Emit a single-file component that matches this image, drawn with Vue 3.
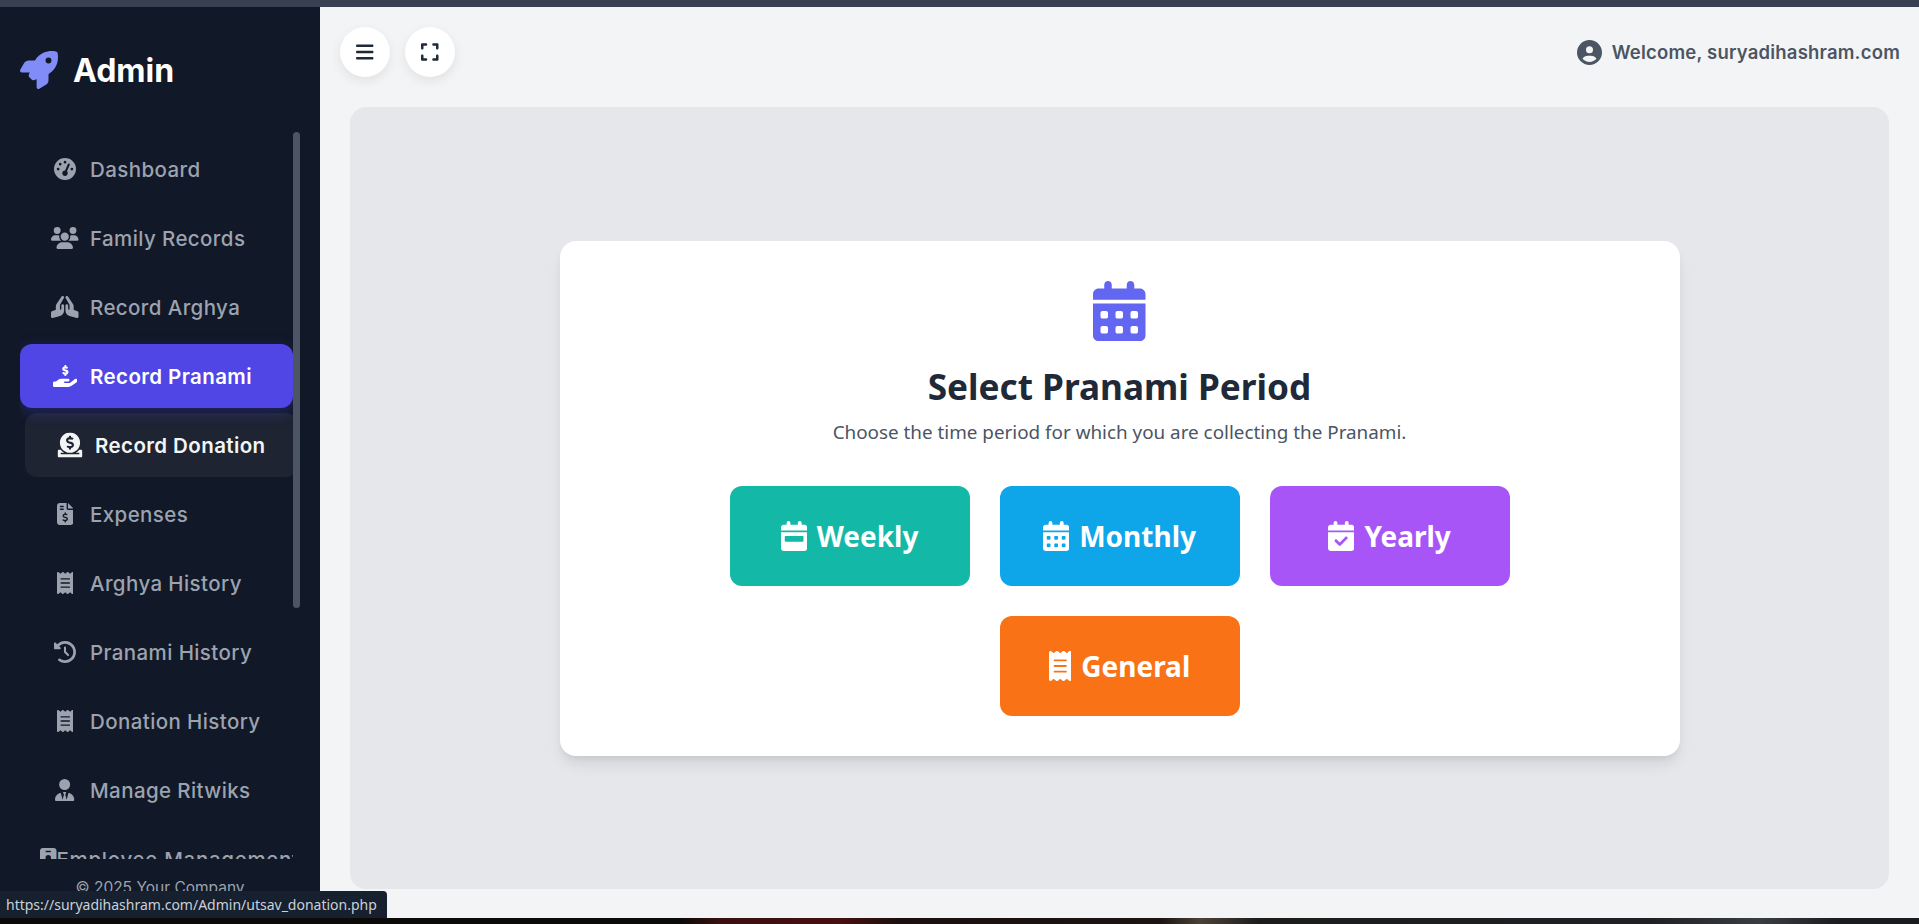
<script setup>
const calTop = 'M128 0c17.7 0 32 14.3 32 32V64H288V32c0-17.7 14.3-32 32-32s32 14.3 32 32V64h48c26.5 0 48 21.5 48 48v48H0V112C0 85.5 21.5 64 48 64H96V32c0-17.7 14.3-32 32-32z'
const calDays = calTop + 'M0 192H448V464c0 26.5-21.5 48-48 48H48c-26.5 0-48-21.5-48-48V192zm64 80v32c0 8.8 7.2 16 16 16h32c8.8 0 16-7.2 16-16V272c0-8.8-7.2-16-16-16H80c-8.8 0-16 7.2-16 16zm128 0v32c0 8.8 7.2 16 16 16h32c8.8 0 16-7.2 16-16V272c0-8.8-7.2-16-16-16H208c-8.8 0-16 7.2-16 16zm144-16c-8.8 0-16 7.2-16 16v32c0 8.8 7.2 16 16 16h32c8.8 0 16-7.2 16-16V272c0-8.8-7.2-16-16-16H336zM64 400v32c0 8.8 7.2 16 16 16h32c8.8 0 16-7.2 16-16V400c0-8.8-7.2-16-16-16H80c-8.8 0-16 7.2-16 16zm144-16c-8.8 0-16 7.2-16 16v32c0 8.8 7.2 16 16 16h32c8.8 0 16-7.2 16-16V400c0-8.8-7.2-16-16-16H208zm112 16v32c0 8.8 7.2 16 16 16h32c8.8 0 16-7.2 16-16V400c0-8.8-7.2-16-16-16H336c-8.8 0-16 7.2-16 16z'
const calWeek = calTop + 'M0 192H448V464c0 26.5-21.5 48-48 48H48c-26.5 0-48-21.5-48-48V192zm80 64c-8.8 0-16 7.2-16 16v64c0 8.8 7.2 16 16 16H368c8.8 0 16-7.2 16-16V272c0-8.8-7.2-16-16-16H80z'
const calCheck = calTop + 'M0 192H448V464c0 26.5-21.5 48-48 48H48c-26.5 0-48-21.5-48-48V192zM329 305c9.4-9.4 9.4-24.6 0-33.9s-24.6-9.4-33.9 0l-95 95-47-47c-9.4-9.4-24.6-9.4-33.9 0s-9.4 24.6 0 33.9l64 64c9.4 9.4 24.6 9.4 33.9 0L329 305z'
const receipt = 'M14 2.2C22.5-1.7 32.5-.3 39.6 5.8L80 40.4 120.4 5.8c9-7.7 22.3-7.7 31.2 0L192 40.4 232.4 5.8c9-7.7 22.2-7.7 31.2 0L304 40.4 344.4 5.8c7.1-6.1 17.1-7.5 25.6-3.6s14 12.4 14 21.8V488c0 9.4-5.5 17.9-14 21.8s-18.5 2.5-25.6-3.6L304 471.6l-40.4 34.6c-9 7.7-22.2 7.7-31.2 0L192 471.6l-40.4 34.6c-9 7.7-22.3 7.7-31.2 0L80 471.6 39.6 506.2c-7.1 6.1-17.1 7.5-25.6 3.6S0 497.4 0 488V24C0 14.6 5.5 6.1 14 2.2zM96 144c-8.8 0-16 7.2-16 16s7.2 16 16 16H288c8.8 0 16-7.2 16-16s-7.2-16-16-16H96zM80 352c0 8.8 7.2 16 16 16H288c8.8 0 16-7.2 16-16s-7.2-16-16-16H96c-8.8 0-16 7.2-16 16zM96 240c-8.8 0-16 7.2-16 16s7.2 16 16 16H288c8.8 0 16-7.2 16-16s-7.2-16-16-16H96z'

const navItems = [
  { label: 'Dashboard', w: 512, d: 'M0 256a256 256 0 1 1 512 0A256 256 0 1 1 0 256zM288 96a32 32 0 1 0 -64 0 32 32 0 1 0 64 0zM256 416c35.3 0 64-28.7 64-64c0-17.4-6.9-33.1-18.1-44.6L366 161.7c5.3-12.1-.2-26.3-12.3-31.6s-26.3 .2-31.6 12.3L257.9 288c-.6 0-1.3 0-1.9 0c-35.3 0-64 28.7-64 64s28.7 64 64 64zM176 144a32 32 0 1 0 -64 0 32 32 0 1 0 64 0zM96 288a32 32 0 1 0 0-64 32 32 0 1 0 0 64zm352-32a32 32 0 1 0 -64 0 32 32 0 1 0 64 0z' },
  { label: 'Family Records', w: 640, d: 'M144 0a80 80 0 1 1 0 160A80 80 0 1 1 144 0zM512 0a80 80 0 1 1 0 160A80 80 0 1 1 512 0zM0 298.7C0 239.8 47.8 192 106.7 192h42.7c15.9 0 31 3.5 44.6 9.7c-1.3 7.2-1.9 14.7-1.9 22.3c0 38.2 16.8 72.5 43.3 96c-.2 0-.4 0-.7 0H21.3C9.6 320 0 310.4 0 298.7zM405.3 320c-.2 0-.4 0-.7 0c26.6-23.5 43.3-57.8 43.3-96c0-7.6-.7-15-1.9-22.3c13.6-6.3 28.7-9.7 44.6-9.7h42.7C592.2 192 640 239.8 640 298.7c0 11.8-9.6 21.3-21.3 21.3H405.3zM224 224a96 96 0 1 1 192 0 96 96 0 1 1 -192 0zM128 485.3C128 411.7 187.7 352 261.3 352H378.7C452.3 352 512 411.7 512 485.3c0 14.7-11.9 26.7-26.7 26.7H154.7c-14.7 0-26.7-11.9-26.7-26.7z' },
  { label: 'Record Arghya', w: 640, d: 'M351.2 4.8c3.2-2 6.6-3.3 10-4.1c4.7-1 9.6-.9 14.1 .1c7.7 1.8 14.8 6.5 19.4 13.6L514.6 194.2c8.8 13.1 13.4 28.6 13.4 44.4v73.5c0 6.9 4.4 13 10.9 15.2l79.2 26.4C631.2 358 640 370.2 640 384v96c0 9.9-4.6 19.3-12.5 25.4s-18.1 8.1-27.7 5.5L431 465.9c-56-14.9-95-65.7-95-123.7V224c0-17.7 14.3-32 32-32s32 14.3 32 32v80c0 8.8 7.2 16 16 16s16-7.2 16-16V219.1c0-7-1.8-13.8-5.3-19.8L340.3 48.1c-1.7-3-2.9-6.1-3.6-9.3c-1-4.7-1-9.6 .1-14.1c1.9-8 6.8-15.2 14.4-19.9zm-62.4 0c7.5 4.6 12.4 11.9 14.4 19.8c1.1 4.6 1.2 9.4 .1 14.1c-.7 3.2-1.9 6.3-3.6 9.3L213.3 199.3c-3.5 6-5.3 12.9-5.3 19.8V304c0 8.8 7.2 16 16 16s16-7.2 16-16V224c0-17.7 14.3-32 32-32s32 14.3 32 32V342.3c0 58-39 108.7-95 123.7l-168.7 45c-9.6 2.6-19.9 .5-27.7-5.5S0 489.9 0 480V384c0-13.8 8.8-26 21.9-30.4l79.2-26.4c6.5-2.2 10.9-8.3 10.9-15.2V238.5c0-15.8 4.7-31.2 13.4-44.4L245.2 14.5c4.6-7.1 11.7-11.8 19.4-13.6c4.6-1.1 9.4-1.2 14.1-.1c3.5 .8 6.9 2.1 10 4.1z' },
  { label: 'Record Pranami', w: 576, state: 'active', d: 'M312 24V34.5c6.4 1.2 12.6 2.7 18.2 4.2c12.8 3.4 20.4 16.6 17 29.4s-16.6 20.4-29.4 17c-10.9-2.9-21.1-4.9-30.2-5c-7.3-.1-14.7 1.7-19.4 4.4c-2.1 1.3-3.1 2.4-3.5 3c-.3 .5-.7 1.2-.7 2.8c0 .3 0 .5 0 .6c.2 .2 .9 1.2 3.3 2.6c5.8 3.5 14.4 6.2 27.4 10.1l.9 .3c11.1 3.3 25.9 7.8 37.9 15.3c13.7 8.6 26.1 22.9 26.4 44.9c.3 22.5-11.4 38.9-26.7 48.5c-6.7 4.1-13.9 7-21.3 8.8V232c0 13.3-10.7 24-24 24s-24-10.7-24-24V220.6c-9.5-2.3-18.2-5.3-25.6-7.8c-2.1-.7-4.1-1.4-6-2c-12.6-4.2-19.4-17.8-15.2-30.4s17.8-19.4 30.4-15.2c2.6 .9 5 1.7 7.3 2.5c13.6 4.6 23.4 7.9 33.9 8.3c8 .3 15.1-1.6 19.2-4.1c1.9-1.2 2.8-2.2 3.2-2.9c.4-.6 .9-1.8 .8-4.1l0-.2c0-1 0-2.1-4-4.6c-5.7-3.6-14.3-6.4-27.1-10.3l-1.9-.6c-10.8-3.2-25-7.5-36.4-14.4c-13.5-8.1-26.5-22-26.6-44.1c-.1-22.9 12.9-38.6 27.7-47.4c6.4-3.8 13.3-6.4 20.2-8.2V24c0-13.3 10.7-24 24-24s24 10.7 24 24zM568.2 336.3c13.1 17.8 9.3 42.8-8.5 55.9L433.1 485.5c-23.4 17.2-51.6 26.5-80.7 26.5H192 32c-17.7 0-32-14.3-32-32V416c0-17.7 14.3-32 32-32H68.8l44.9-36c22.7-18.2 50.9-28 80-28H272h16 64c17.7 0 32 14.3 32 32s-14.3 32-32 32H288 272c-8.8 0-16 7.2-16 16s7.2 16 16 16H392.6l119.7-88.2c17.8-13.1 42.8-9.3 55.9 8.5z' },
  { label: 'Record Donation', w: 512, state: 'hover', d: 'M256 416c114.9 0 208-93.1 208-208S370.9 0 256 0 48 93.1 48 208s93.1 208 208 208zM233.8 97.4V80.6c0-9.2 7.4-16.6 16.6-16.6h11.1c9.2 0 16.6 7.4 16.6 16.6v17c15.5 .8 30.5 6.1 43 15.4 5.6 4.1 6.2 12.3 1.2 17.1L306 145.6c-3.8 3.7-9.5 3.8-14 1-5.4-3.4-11.4-5.1-17.8-5.1h-38.9c-9 0-16.3 8.2-16.3 18.3 0 8.2 5 15.5 12.1 17.6l62.3 18.7c25.7 7.7 43.7 32.4 43.7 60.1 0 34-26.4 61.5-59.1 62.4v16.8c0 9.2-7.4 16.6-16.6 16.6h-11.1c-9.2 0-16.6-7.4-16.6-16.6v-17c-15.5-.8-30.5-6.1-43-15.4-5.6-4.1-6.2-12.3-1.2-17.1l16.3-15.5c3.8-3.7 9.5-3.8 14-1 5.4 3.4 11.4 5.1 17.8 5.1h38.9c9 0 16.3-8.2 16.3-18.3 0-8.2-5-15.5-12.1-17.6l-62.3-18.7c-25.7-7.7-43.7-32.4-43.7-60.1 .1-34 26.4-61.5 59.1-62.4zM480 352h-32.5c-19.6 26-44.6 47.7-73 64h63.8c5.3 0 9.6 3.6 9.6 8v16c0 4.4-4.3 8-9.6 8H73.6c-5.3 0-9.6-3.6-9.6-8v-16c0-4.4 4.3-8 9.6-8h63.8c-28.4-16.3-53.3-38-73-64H32c-17.7 0-32 14.3-32 32v96c0 17.7 14.3 32 32 32h448c17.7 0 32-14.3 32-32v-96c0-17.7-14.3-32-32-32z' },
  { label: 'Expenses', w: 384, d: 'M64 0C28.7 0 0 28.7 0 64V448c0 35.3 28.7 64 64 64H320c35.3 0 64-28.7 64-64V160H256c-17.7 0-32-14.3-32-32V0H64zM256 0V128H384L256 0zM64 80c0-8.8 7.2-16 16-16h64c8.8 0 16 7.2 16 16s-7.2 16-16 16H80c-8.8 0-16-7.2-16-16zm0 64c0-8.8 7.2-16 16-16h64c8.8 0 16 7.2 16 16s-7.2 16-16 16H80c-8.8 0-16-7.2-16-16zm128 72c8.8 0 16 7.2 16 16v17.3c8.5 1.2 16.7 3.1 24.1 5.1c8.5 2.3 13.6 11 11.3 19.6s-11 13.6-19.6 11.3c-11.1-3-22-5.2-32.1-5.3c-8.4-.1-17.4 1.8-23.6 5.5c-5.7 3.4-8.1 7.3-8.1 12.8c0 3.7 1.3 6.5 7.3 10.1c6.9 4.1 16.6 7.1 29.2 10.9l.5 .1c11.3 3.4 25.3 7.6 36.3 14.6c12.1 7.6 22.4 19.7 22.7 38.2c.3 19.3-9.6 33.3-22.9 41.6c-7.7 4.8-16.4 7.6-25.1 9.1V440c0 8.8-7.2 16-16 16s-16-7.2-16-16V422.2c-11.2-2.1-21.7-5.7-30.9-8.9c-2.1-.7-4.2-1.4-6.2-2.1c-8.4-2.8-12.9-11.9-10.1-20.2s11.9-12.9 20.2-10.1c2.5 .8 4.8 1.6 7.1 2.4c13.6 4.6 24.6 8.4 36.3 8.7c9.1 .3 17.9-1.7 23.7-5.3c5.1-3.2 7.9-7.3 7.8-14c-.1-4.6-1.8-7.8-7.7-11.6c-6.8-4.3-16.5-7.4-29-11.2l-1.6-.5c-11-3.3-24.3-7.3-34.8-13.7c-12-7.2-22.6-18.9-22.7-37.3c-.1-19.4 10.8-32.8 23.8-40.5c7.5-4.4 15.8-7.2 24.1-8.7V232c0-8.8 7.2-16 16-16z' },
  { label: 'Arghya History', w: 384, d: receipt },
  { label: 'Pranami History', w: 512, d: 'M75 75L41 41C25.9 25.9 0 36.6 0 57.9V168c0 13.3 10.7 24 24 24H134.1c21.4 0 32.1-25.9 17-41l-30.8-30.8C155 85.5 203 64 256 64c106 0 192 86 192 192s-86 192-192 192c-40.8 0-78.6-12.7-109.7-34.4c-14.5-10.1-34.4-6.6-44.6 7.9s-6.6 34.4 7.9 44.6C151.2 495 201.7 512 256 512c141.4 0 256-114.6 256-256S397.4 0 256 0C185.3 0 121.3 28.7 75 75zm181 53c-13.3 0-24 10.7-24 24V256c0 6.4 2.5 12.5 7 17l72 72c9.4 9.4 24.6 9.4 33.9 0s9.4-24.6 0-33.9l-65-65V152c0-13.3-10.7-24-24-24z' },
  { label: 'Donation History', w: 384, d: receipt },
  { label: 'Manage Ritwiks', w: 448, d: 'M96 128a128 128 0 1 0 256 0A128 128 0 1 0 96 128zm94.5 200.2l18.6 31L175.8 483.1l-36-146.9c-2-8.1-9.8-13.4-17.9-11.3C51.9 342.4 0 405.8 0 481.3c0 17 13.8 30.7 30.7 30.7H162.5c0 0 0 0 .1 0H168 280h5.3c0 0 0 0 .1 0H417.3c17 0 30.7-13.8 30.7-30.7c0-75.5-51.9-138.9-121.9-156.4c-8.1-2-15.9 3.3-17.9 11.3l-36 146.9L238.9 359.2l18.6-31c6.4-10.7-1.3-24.2-13.7-24.2H224 204.3c-12.4 0-20.1 13.6-13.7 24.2z' },
  { label: 'Employee Management', w: 384, state: 'long', d: 'M64 0C28.7 0 0 28.7 0 64V448c0 35.3 28.7 64 64 64H320c35.3 0 64-28.7 64-64V64c0-35.3-28.7-64-64-64H64zm96 320h64c44.2 0 80 35.8 80 80c0 8.8-7.2 16-16 16H96c-8.8 0-16-7.2-16-16c0-44.2 35.8-80 80-80zm-32-96a64 64 0 1 1 128 0 64 64 0 1 1 -128 0zM144 64h96c8.8 0 16 7.2 16 16s-7.2 16-16 16H144c-8.8 0-16-7.2-16-16s7.2-16 16-16z' },
]

const periods = [
  { label: 'Weekly', color: '#14b8a6', w: 448, d: calWeek },
  { label: 'Monthly', color: '#0ea5e9', w: 448, d: calDays },
  { label: 'Yearly', color: '#a855f7', w: 448, d: calCheck },
  { label: 'General', color: '#f97316', w: 384, d: receipt },
]
</script>

<template>
  <div class="page">
    <div class="top-strip"></div>
    <div class="shell">
      <aside class="sidebar">
        <div class="brand">
          <svg class="brand-icon" viewBox="0 0 512 512"><path fill="currentColor" d="M156.6 384.9L125.7 354c-8.5-8.5-11.5-20.8-7.7-32.2c3-8.9 7-20.5 11.8-33.8L24 288c-8.6 0-16.6-4.6-20.9-12.1s-4.2-16.7 .2-24.1l52.5-88.5c13-21.9 36.5-35.3 62-35.3l82.3 0c2.4-4 4.8-7.7 7.2-11.3C289.1-4.1 411.1-8.1 483.9 5.3c11.6 2.1 20.6 11.2 22.8 22.8c13.4 72.9 9.3 194.8-111.4 276.7c-3.5 2.4-7.3 4.8-11.3 7.2v82.3c0 25.5-13.4 49-35.3 62l-88.5 52.5c-7.4 4.4-16.6 4.5-24.1 .2s-12.1-12.2-12.1-20.9V380.8c-14.1 4.9-26.4 8.9-35.7 11.9c-11.2 3.6-23.4 .5-31.8-7.8zM384 168a40 40 0 1 0 0-80 40 40 0 1 0 0 80z"/></svg>
          <span>Admin</span>
        </div>
        <div class="nav-wrap">
          <nav class="nav">
            <a v-for="item in navItems" :key="item.label" class="nav-item" :class="item.state">
              <span class="nav-icon">
                <svg :viewBox="`0 0 ${item.w} 512`" :style="{ width: (item.w / 512) * 22 + 'px' }"><path fill="currentColor" :d="item.d"/></svg>
              </span>
              <span class="nav-label">{{ item.label }}</span>
            </a>
          </nav>
          <div class="scroll-thumb"></div>
        </div>
        <div class="copyright">© 2025 Your Company</div>
      </aside>

      <main class="main">
        <header class="topbar">
          <div class="top-buttons">
            <button class="round-btn">
              <svg viewBox="0 0 448 512"><path fill="currentColor" d="M0 96C0 78.3 14.3 64 32 64H416c17.7 0 32 14.3 32 32s-14.3 32-32 32H32C14.3 128 0 113.7 0 96zM0 256c0-17.7 14.3-32 32-32H416c17.7 0 32 14.3 32 32s-14.3 32-32 32H32c-17.7 0-32-14.3-32-32zM448 416c0 17.7-14.3 32-32 32H32c-17.7 0-32-14.3-32-32s14.3-32 32-32H416c17.7 0 32 14.3 32 32z"/></svg>
            </button>
            <button class="round-btn">
              <svg viewBox="0 0 448 512"><path fill="currentColor" d="M32 32C14.3 32 0 46.3 0 64v96c0 17.7 14.3 32 32 32s32-14.3 32-32V96h64c17.7 0 32-14.3 32-32s-14.3-32-32-32H32zM64 352c0-17.7-14.3-32-32-32s-32 14.3-32 32v96c0 17.7 14.3 32 32 32h96c17.7 0 32-14.3 32-32s-14.3-32-32-32H64V352zM320 32c-17.7 0-32 14.3-32 32s14.3 32 32 32h64v64c0 17.7 14.3 32 32 32s32-14.3 32-32V64c0-17.7-14.3-32-32-32H320zM448 352c0-17.7-14.3-32-32-32s-32 14.3-32 32v64H320c-17.7 0-32 14.3-32 32s14.3 32 32 32h96c17.7 0 32-14.3 32-32V352z"/></svg>
            </button>
          </div>
          <div class="welcome">
            <svg viewBox="0 0 512 512"><path fill="currentColor" d="M399 384.2C376.9 345.8 335.4 320 288 320H224c-47.4 0-88.9 25.8-111 64.2c35.2 39.2 86.2 63.8 143 63.8s107.8-24.7 143-63.8zM0 256a256 256 0 1 1 512 0A256 256 0 1 1 0 256zm256 16a72 72 0 1 0 0-144 72 72 0 1 0 0 144z"/></svg>
            <span>Welcome, suryadihashram.com</span>
          </div>
        </header>

        <section class="panel">
          <div class="card">
            <svg class="card-icon" viewBox="0 0 448 512"><path fill="currentColor" :d="calDays"/></svg>
            <h1>Select Pranami Period</h1>
            <p>Choose the time period for which you are collecting the Pranami.</p>
            <div class="period-list">
              <a v-for="p in periods" :key="p.label" class="period" :style="{ background: p.color }">
                <svg :viewBox="`0 0 ${p.w} 512`" :style="{ width: (p.w / 512) * 30 + 'px' }"><path fill="currentColor" :d="p.d"/></svg>
                <span>{{ p.label }}</span>
              </a>
            </div>
          </div>
        </section>
      </main>
    </div>
    <div class="bottom-strip"></div>
    <div class="status-tip">https://suryadihashram.com/Admin/utsav_donation.php</div>
  </div>
</template>

<style scoped>
.page {
  position: relative;
  height: 924px;
  display: flex;
  flex-direction: column;
  overflow: hidden;
  font-family: "Noto Sans", "Open Sans", sans-serif;
}

.top-strip {
  height: 7px;
  background: #374151;
  flex: none;
}

.bottom-strip {
  height: 6px;
  flex: none;
  background: linear-gradient(90deg, #0c0a09 0, #0c0a09 680px, #3a0f10 720px, #45100f 840px, #1a0f0e 900px, #1a1512 1160px, #4a4238 1200px, #1c1c1c 1260px, #1e2024 1650px, #3a3d44 1760px, #1a1b1e 1840px);
}

.shell {
  flex: 1;
  display: flex;
  min-height: 0;
}

.sidebar {
  width: 320px;
  flex: none;
  background: #111827;
  display: flex;
  flex-direction: column;
  font-family: Inter, "Noto Sans", sans-serif;
  overflow: hidden;
}

.brand {
  height: 124px;
  flex: none;
  box-sizing: border-box;
  padding: 2px 0 0 20px;
  display: flex;
  align-items: center;
  gap: 15px;
  color: #fff;
  font-size: 32px;
  font-weight: 700;
}

.brand-icon {
  width: 38px;
  height: 38px;
  color: #818cf8;
}

.nav-wrap {
  position: relative;
  height: 728px;
  flex: none;
  padding: 6px 0 0 20px;
  box-sizing: border-box;
  width: 300px;
}

.nav {
  width: 273px;
  height: 722px;
  overflow: hidden;
  display: flex;
  flex-direction: column;
  gap: 5px;
}

.nav-item {
  height: 64px;
  flex: none;
  display: flex;
  align-items: center;
  padding-left: 30px;
  border-radius: 12px;
  color: #9ca3af;
  font-size: 20.5px;
  letter-spacing: 0.4px;
  font-weight: 500;
  white-space: nowrap;
}

.nav-item.active {
  background: #4f46e5;
  color: #fff;
  font-weight: 600;
  box-shadow: 0 4px 15px rgba(79, 70, 229, 0.3);
}

.nav-item.hover {
  background: rgba(255, 255, 255, 0.055);
  color: #f3f4f6;
  font-weight: 600;
  margin-left: 5px;
  margin-right: -5px;
}

.nav-item.hover svg {
  transform: scale(1.13);
}

.nav-item.long {
  padding-left: 20px;
  letter-spacing: 0.7px;
}

.nav-icon {
  width: 30px;
  margin-right: 10px;
  display: flex;
  justify-content: center;
  flex: none;
}

.nav-item.long .nav-icon {
  width: auto;
  margin-right: 0;
}

.nav-icon svg {
  height: 22px;
  display: block;
}

.scroll-thumb {
  position: absolute;
  top: 1px;
  right: 0;
  width: 7px;
  height: 476px;
  border-radius: 4px;
  background: #4b5563;
}

.copyright {
  text-align: center;
  color: #9ca3af;
  font-size: 15.5px;
  margin-top: 19px;
}

.main {
  flex: 1;
  min-width: 0;
  background: #f3f4f6;
  display: flex;
  flex-direction: column;
}

.topbar {
  display: flex;
  justify-content: space-between;
  align-items: center;
  padding: 20px 19px 0 20px;
  flex: none;
}

.top-buttons {
  display: flex;
  gap: 15px;
}

.round-btn {
  width: 50px;
  height: 50px;
  border: none;
  border-radius: 50%;
  background: #fff;
  color: #1f2937;
  box-shadow: 0 4px 12px rgba(0, 0, 0, 0.08);
  display: flex;
  align-items: center;
  justify-content: center;
  padding: 0;
}

.round-btn svg {
  width: 17.5px;
  height: 20px;
}

.welcome {
  display: flex;
  align-items: center;
  gap: 10px;
  color: #4b5563;
  font-family: Inter, "Noto Sans", sans-serif;
  font-size: 18.5px;
  letter-spacing: 0.2px;
  font-weight: 600;
}

.welcome svg {
  width: 25px;
  height: 25px;
}

.panel {
  flex: 1;
  margin: 30px 30px 29px;
  background: #e5e7eb;
  border-radius: 16px;
  display: flex;
  align-items: center;
  justify-content: center;
}

.card {
  width: 1120px;
  box-sizing: border-box;
  padding: 40px;
  background: #fff;
  border-radius: 16px;
  box-shadow: 0 10px 15px -3px rgba(0, 0, 0, 0.1), 0 4px 6px -2px rgba(0, 0, 0, 0.05);
  text-align: center;
}

.card-icon {
  display: block;
  width: 52.5px;
  height: 60px;
  margin: 0 auto 21px;
  color: #6366f1;
}

.card h1 {
  margin: 0 0 8px;
  font-size: 35.2px;
  line-height: 48px;
  font-weight: 700;
  color: #1f2937;
}

.card p {
  margin: 0 0 40px;
  font-size: 18.85px;
  line-height: 28px;
  color: #4b5563;
}

.period-list {
  display: flex;
  flex-wrap: wrap;
  justify-content: center;
  gap: 30px;
}

.period {
  width: 240px;
  height: 100px;
  border-radius: 12px;
  color: #fff;
  display: flex;
  align-items: center;
  justify-content: center;
  gap: 10px;
  font-size: 28px;
  font-weight: 700;
}

.period svg {
  height: 30px;
  display: block;
}

.status-tip {
  position: absolute;
  left: 0;
  bottom: 6px;
  width: 387px;
  height: 27px;
  box-sizing: border-box;
  padding: 0 6px;
  line-height: 27px;
  background: #17202e;
  color: #c9d1d9;
  font-size: 14px;
  font-family: "Noto Sans", sans-serif;
  border-top-right-radius: 4px;
  white-space: nowrap;
}
</style>

<style>
html, body {
  margin: 0;
  background: #f3f4f6;
}
</style>
